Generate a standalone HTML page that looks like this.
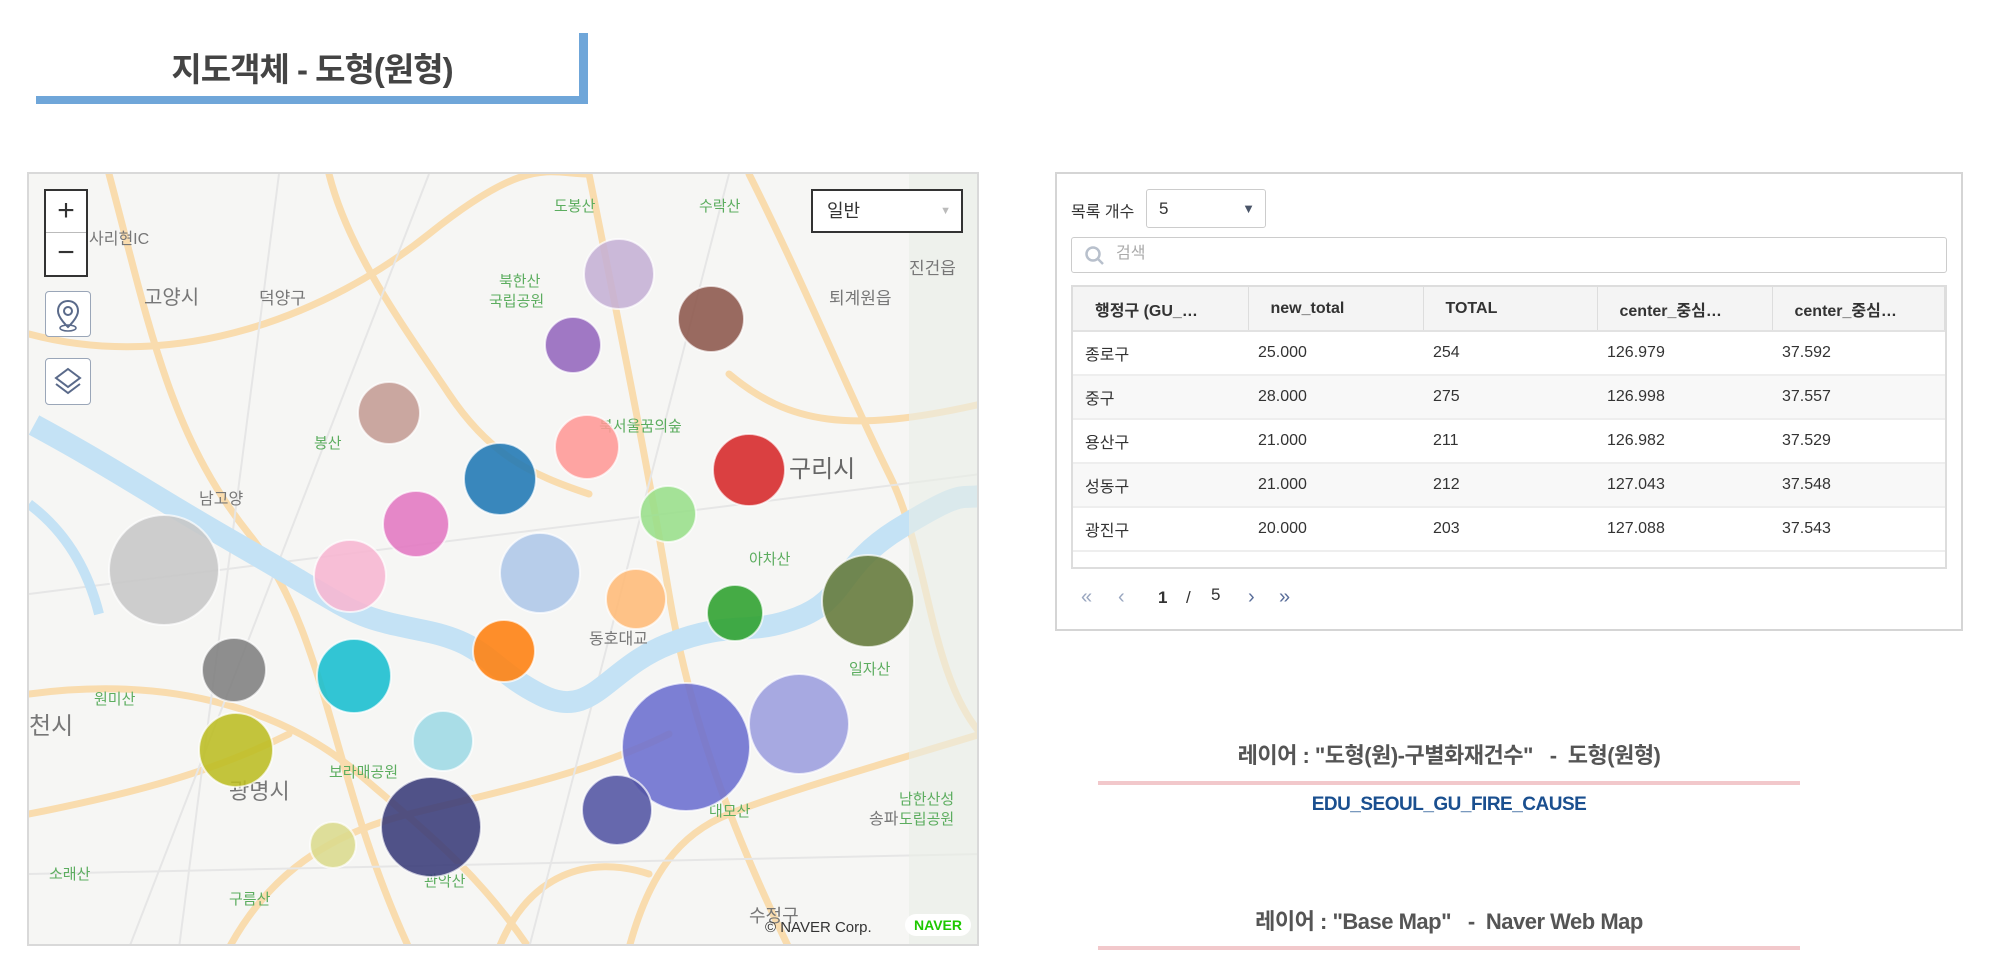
<!DOCTYPE html>
<html><head><meta charset="utf-8"><style>
*{margin:0;padding:0;box-sizing:border-box}
body{width:2002px;height:979px;background:#fff;position:relative;overflow:hidden;font-family:"Liberation Sans","Noto Sans CJK KR",sans-serif;color:#333}
.a{position:absolute}
.title{left:36px;top:33px;width:552px;height:71px}
.title .t{position:absolute;left:0;width:552px;top:10px;text-align:center;font-size:33px;font-weight:bold;color:#444;letter-spacing:-1px}
.bb{background:#6fa6d9;position:absolute}
#map{left:27px;top:172px;width:952px;height:774px;border:2px solid #d9d9d9;background:#f6f6f4;overflow:hidden}
.btn{position:absolute;background:#fff;border:1px solid #9aa6b8;border-radius:4px}
.panel{left:1055px;top:172px;width:908px;height:459px;border:2px solid #d5d5d5}
table{border-collapse:collapse;width:100%;font-size:16px}
td{vertical-align:middle}
.lbl{font-size:22px;font-weight:bold;color:#555;text-align:center;width:702px;left:1098px;letter-spacing:-0.5px}
.pl{left:1098px;width:702px;height:4px;background:#f2c8cb}
</style></head><body>
<div class="a title">
<div class="t">지도객체 - 도형(원형)</div>
<div class="bb" style="left:0;top:63px;width:552px;height:8px"></div>
<div class="bb" style="left:543px;top:0;width:9px;height:71px"></div>
</div>

<div class="a" id="map">
<svg width="952" height="774" style="position:absolute;left:0;top:0">
<g fill="none" stroke="#f9dcae" stroke-width="7" stroke-linecap="round">
<path d="M80 0 C120 150 140 260 220 360 S300 600 380 774"/>
<path d="M0 160 C150 200 300 140 400 60 S520 0 560 0"/>
<path d="M560 0 C600 200 620 300 640 420 S700 650 760 774"/>
<path d="M720 0 C780 120 820 220 860 300 S900 500 952 560"/>
<path d="M0 520 C150 500 260 540 330 600 S450 700 500 774"/>
<path d="M200 774 C240 700 300 660 380 640 S560 600 640 560"/>
<path d="M0 640 C100 620 180 600 260 560"/>
<path d="M600 774 C620 700 650 660 700 640 S820 600 952 560"/>
<path d="M300 0 C320 80 380 160 420 220 S500 300 560 320"/>
<path d="M470 774 C500 700 560 680 620 700"/>
<path d="M700 200 C760 250 820 260 952 230"/>
</g>
<g fill="none" stroke="#e6e6e6" stroke-width="2">
<path d="M0 420 L952 300"/><path d="M100 774 L400 0"/><path d="M500 774 L700 0"/><path d="M0 700 L952 680"/><path d="M250 0 L150 774"/>
</g>
<path d="M5 251 C40 270 63 283 127 322 S204 367 268 405 S332 444 396 457 S460 495 512 521 S576 495 640 470 S717 463 768 444 S807 393 871 354 S930 325 952 322" fill="none" stroke="#c4e2f5" stroke-width="22" stroke-linejoin="round"/>
<path d="M0 330 C40 360 60 400 70 440" fill="none" stroke="#c4e2f5" stroke-width="10"/>
<rect x="880" y="0" width="72" height="774" fill="#e9efe6" opacity="0.6"/>
<g font-family="Liberation Sans,Noto Sans CJK KR,sans-serif" fill="#777" font-size="20">
<text x="115" y="130">고양시</text><text x="760" y="303" font-size="24" fill="#666">구리시</text>
<text x="0" y="560" font-size="24">천시</text><text x="200" y="625" font-size="22">광명시</text>
<text x="520" y="798" font-size="22">과천시</text><text x="720" y="748" font-size="18">수정구</text>
<text x="230" y="130" font-size="17">덕양구</text><text x="800" y="130" font-size="17">퇴계원읍</text>
<text x="880" y="100" font-size="17">진건읍</text>
<text x="60" y="70" font-size="16">사리현IC</text><text x="170" y="330" font-size="16">남고양</text>
<text x="560" y="470" font-size="16">동호대교</text><text x="840" y="650" font-size="16">송파</text>
</g>
<g font-family="Liberation Sans,Noto Sans CJK KR,sans-serif" fill="#5cad5f" font-size="15">
<text x="525" y="37">도봉산</text><text x="670" y="37">수락산</text><text x="470" y="112">북한산</text><text x="460" y="132">국립공원</text>
<text x="570" y="257">북서울꿈의숲</text><text x="285" y="274">봉산</text><text x="720" y="390">아차산</text>
<text x="820" y="500">일자산</text><text x="65" y="530">원미산</text><text x="300" y="603">보라매공원</text>
<text x="395" y="712">관악산</text><text x="680" y="642">대모산</text><text x="870" y="630">남한산성</text><text x="870" y="650">도립공원</text>
<text x="20" y="705">소래산</text><text x="200" y="730">구름산</text>
</g>
<g fill-opacity="0.88" stroke="#fff" stroke-width="2" stroke-opacity="0.7">
<circle cx="590" cy="100" r="35" fill="#c5b0d5"/>
<circle cx="682" cy="145" r="33" fill="#8c564b"/>
<circle cx="544" cy="171" r="28" fill="#9467bd"/>
<circle cx="360" cy="239" r="31" fill="#c49c94"/>
<circle cx="558" cy="273" r="32" fill="#ff9896"/>
<circle cx="720" cy="296" r="36" fill="#d62728"/>
<circle cx="471" cy="305" r="36" fill="#1f77b4"/>
<circle cx="639" cy="340" r="28" fill="#98df8a"/>
<circle cx="387" cy="350" r="33" fill="#e377c2"/>
<circle cx="135" cy="396" r="55" fill="#c7c7c7"/>
<circle cx="321" cy="402" r="36" fill="#f7b6d2"/>
<circle cx="511" cy="399" r="40" fill="#aec7e8"/>
<circle cx="607" cy="425" r="30" fill="#ffbb78"/>
<circle cx="706" cy="439" r="28" fill="#2ca02c"/>
<circle cx="839" cy="427" r="46" fill="#637939"/>
<circle cx="475" cy="477" r="31" fill="#ff7f0e"/>
<circle cx="205" cy="496" r="32" fill="#7f7f7f"/>
<circle cx="325" cy="502" r="37" fill="#17becf"/>
<circle cx="414" cy="567" r="30" fill="#9edae5"/>
<circle cx="657" cy="573" r="64" fill="#6b6ecf"/>
<circle cx="770" cy="550" r="50" fill="#9c9ede"/>
<circle cx="207" cy="576" r="37" fill="#bcbd22"/>
<circle cx="402" cy="653" r="50" fill="#393b79"/>
<circle cx="588" cy="636" r="35" fill="#5254a3"/>
<circle cx="304" cy="671" r="23" fill="#dbdb8d"/>
</g>
</svg>
<div class="a" style="left:15px;top:15px;width:44px;height:88px;background:#fff;border:2px solid #333">
<div style="position:absolute;left:0;top:0;width:40px;height:42px;border-bottom:1px solid #bbb;text-align:center;font-size:30px;line-height:40px">+</div>
<div style="position:absolute;left:0;top:42px;width:40px;height:42px;text-align:center;font-size:30px;line-height:40px">−</div>
</div>
<div class="btn" style="left:16px;top:117px;width:46px;height:46px">
<svg width="44" height="44"><path d="M22 9c-6 0-10 4-10 10 0 7 10 16 10 16s10-9 10-16c0-6-4-10-10-10z" fill="none" stroke="#5a6a8a" stroke-width="2"/><circle cx="22" cy="19" r="4" fill="none" stroke="#5a6a8a" stroke-width="2"/><ellipse cx="22" cy="36" rx="8" ry="3" fill="none" stroke="#5a6a8a" stroke-width="1.5"/></svg></div>
<div class="btn" style="left:16px;top:184px;width:46px;height:47px">
<svg width="44" height="44"><path d="M22 10 L34 19 L22 28 L10 19 Z" fill="none" stroke="#5a6a8a" stroke-width="2"/><path d="M10 25 L22 34 L34 25" fill="none" stroke="#5a6a8a" stroke-width="2"/></svg></div>
<div class="a" style="left:782px;top:15px;width:152px;height:44px;background:#fff;border:2px solid #333;font-size:18px;line-height:40px;padding-left:14px">일반<span style="position:absolute;right:10px;top:0;color:#bbb;font-size:11px">▼</span></div>
<div class="a" style="left:736px;top:745px;font-size:15px;color:#333">© NAVER Corp.</div>
<div class="a" style="left:876px;top:740px;width:66px;height:22px;background:#fff;border-radius:11px;color:#1ec800;font-weight:bold;font-size:14px;text-align:center;line-height:22px">NAVER</div>
</div>

<div class="a panel">
<div class="a" style="left:14px;top:24px;font-size:16px">목록 개수</div>
<div class="a" style="left:89px;top:15px;width:120px;height:39px;border:1px solid #ccc;border-radius:3px;font-size:17px;line-height:37px;padding-left:12px">5<span style="position:absolute;right:10px;top:0;color:#4a5568;font-size:13px">▼</span></div>
<div class="a" style="left:14px;top:63px;width:876px;height:36px;border:1px solid #ccc;border-radius:3px;font-size:16px;color:#aaa;line-height:32px;padding-left:44px">검색
<svg class="a" style="left:12px;top:7px" width="22" height="22"><circle cx="9" cy="9" r="6.5" fill="none" stroke="#b8c0cc" stroke-width="2.5"/><path d="M14 14 L19 19" stroke="#b8c0cc" stroke-width="2.5"/></svg></div>
<div class="a" style="left:14px;top:111px;width:876px;height:284px;border:2px solid #ddd">
<table>
<tr style="height:44px;background:#f4f4f4;font-weight:bold;border-bottom:2px solid #e2e2e2">
<td style="width:175px;padding-left:22px;border-right:1px solid #ddd">행정구 (GU_…</td><td style="width:175px;padding-left:22px;border-right:1px solid #ddd">new_total</td><td style="width:174px;padding-left:22px;border-right:1px solid #ddd">TOTAL</td><td style="width:175px;padding-left:22px;border-right:1px solid #ddd">center_중심…</td><td style="padding-left:22px;border-right:1px solid #ddd">center_중심…</td></tr>
<tr style="height:44px;border-bottom:2px solid #eee"><td style="padding-left:12px">종로구</td><td style="padding-left:10px">25.000</td><td style="padding-left:10px">254</td><td style="padding-left:10px">126.979</td><td style="padding-left:10px">37.592</td></tr>
<tr style="height:44px;border-bottom:2px solid #eee;background:#f8f8f8"><td style="padding-left:12px">중구</td><td style="padding-left:10px">28.000</td><td style="padding-left:10px">275</td><td style="padding-left:10px">126.998</td><td style="padding-left:10px">37.557</td></tr>
<tr style="height:44px;border-bottom:2px solid #eee"><td style="padding-left:12px">용산구</td><td style="padding-left:10px">21.000</td><td style="padding-left:10px">211</td><td style="padding-left:10px">126.982</td><td style="padding-left:10px">37.529</td></tr>
<tr style="height:44px;border-bottom:2px solid #eee;background:#f8f8f8"><td style="padding-left:12px">성동구</td><td style="padding-left:10px">21.000</td><td style="padding-left:10px">212</td><td style="padding-left:10px">127.043</td><td style="padding-left:10px">37.548</td></tr>
<tr style="height:44px;border-bottom:2px solid #eee"><td style="padding-left:12px">광진구</td><td style="padding-left:10px">20.000</td><td style="padding-left:10px">203</td><td style="padding-left:10px">127.088</td><td style="padding-left:10px">37.543</td></tr>
</table></div>
<div class="a" style="left:24px;top:412px;font-size:20px;color:#9aa7c0">«</div>
<div class="a" style="left:61px;top:412px;font-size:20px;color:#9aa7c0">‹</div>
<div class="a" style="left:101px;top:414px;font-size:17px;font-weight:bold">1</div>
<div class="a" style="left:129px;top:414px;font-size:17px">/</div>
<div class="a" style="left:154px;top:411px;font-size:17px">5</div>
<div class="a" style="left:191px;top:412px;font-size:20px;color:#5a6e9a">›</div>
<div class="a" style="left:222px;top:412px;font-size:20px;color:#5a6e9a">»</div>
</div>

<div class="a lbl" style="top:738px">레이어 : "도형(원)-구별화재건수" &nbsp; - &nbsp;도형(원형)</div>
<div class="a pl" style="top:781px"></div>
<div class="a lbl" style="top:794px;font-size:19px;color:#1a4f8f">EDU_SEOUL_GU_FIRE_CAUSE</div>
<div class="a lbl" style="top:904px">레이어 : "Base Map" &nbsp; - &nbsp;Naver Web Map</div>
<div class="a pl" style="top:946px"></div>
</body></html>
